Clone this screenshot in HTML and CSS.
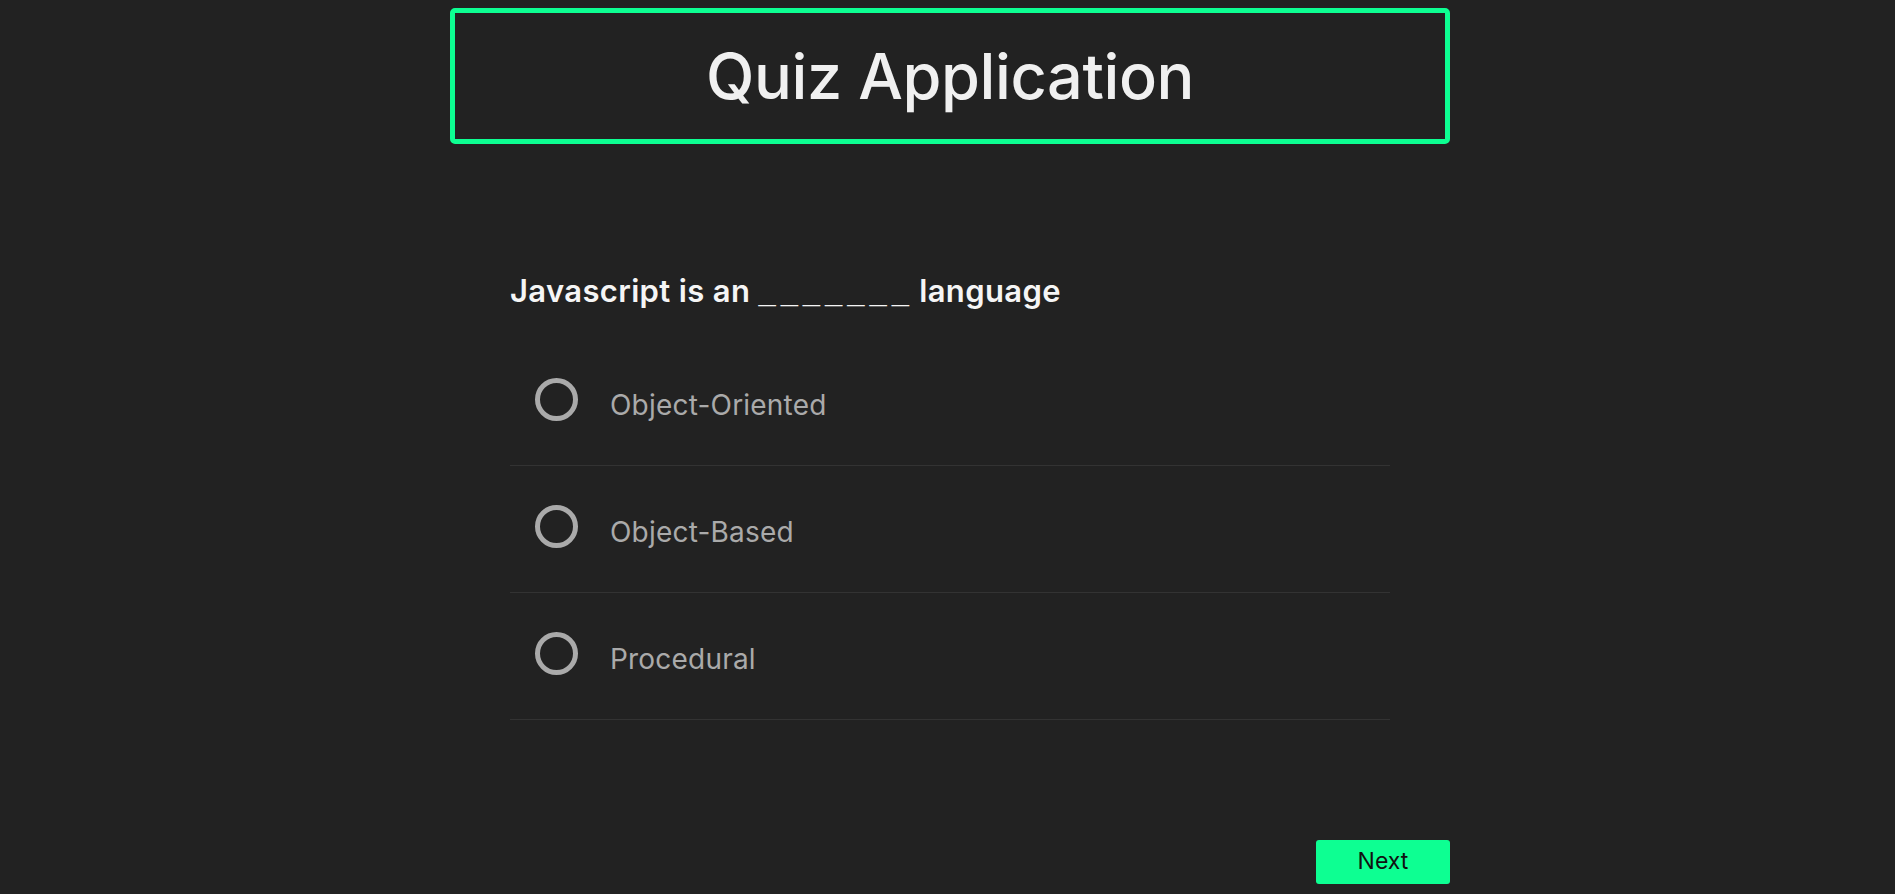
FILE: index.html
```html
<!DOCTYPE html>
<html lang="en">
<head>
<meta charset="utf-8">
<title>Quiz Application</title>
<link rel="stylesheet" href="styles.css">
</head>
<body>
<div class="app">
  <header class="header">
    <h1 class="title">Quiz Application</h1>
  </header>
  <main class="quiz">
    <h2 class="question">Javascript is an <span class="blank">_______</span> language</h2>
    <ul class="options">
      <li class="option"><span class="radio"></span><span class="label">Object-Oriented</span></li>
      <li class="option"><span class="radio"></span><span class="label">Object-Based</span></li>
      <li class="option"><span class="radio"></span><span class="label">Procedural</span></li>
    </ul>
  </main>
  <div class="actions">
    <button class="next">Next</button>
  </div>
</div>
</body>
</html>
```

FILE: styles.css
```css
* { box-sizing: border-box; }
html, body { height: 100%; }
body {
  margin: 0;
  padding: 8px 0 0 5px;
  background: #222222;
  font-family: Inter, "Open Sans", sans-serif;
  color: #f0f0f0;
  overflow: hidden;
}
.app {
  width: 1000px;
  margin: 0 auto;
  display: flex;
  flex-direction: column;
}
.header {
  height: 136px;
  border: 5px solid #0dff92;
  border-radius: 5px;
  display: flex;
  align-items: center;
  justify-content: center;
}
.title {
  margin: 0;
  font-size: 63px;
  font-weight: 500;
  color: #f0f0f0;
  letter-spacing: -0.4px;
}
.quiz {
  width: 880px;
  margin: 0 auto;
  padding-top: 126px;
}
.question {
  margin: 0;
  height: 42px;
  font-size: 31px;
  font-weight: 600;
  color: #f5f5f5;
  line-height: 42px;
  letter-spacing: 0.35px;
}
.blank {
  font-family: "Liberation Sans", Arial, sans-serif;
  font-weight: 700;
  line-height: 1;
  letter-spacing: 5px;
  margin-right: -3px;
}
.options {
  list-style: none;
  margin: 27px 0 0;
  padding: 0;
}
.option {
  height: 127px;
  border-bottom: 1px solid #333333;
  display: flex;
  align-items: center;
  padding: 0 0 6px 25px;
}
.radio {
  width: 43px;
  height: 43px;
  border: 5px solid #aaaaaa;
  border-radius: 50%;
  flex: none;
}
.label {
  margin-left: 32px;
  padding-top: 11px;
  font-size: 28px;
  color: #aaaaaa;
  font-weight: 400;
  letter-spacing: 0.2px;
}
.actions {
  display: flex;
  justify-content: flex-end;
  padding-top: 120px;
}
.next {
  width: 134px;
  height: 44px;
  border: none;
  border-radius: 3px;
  background: #0dff92;
  color: #111111;
  font-family: Inter, "Open Sans", sans-serif;
  font-size: 23px;
  font-weight: 400;
  padding: 0 0 2px;
}
```
